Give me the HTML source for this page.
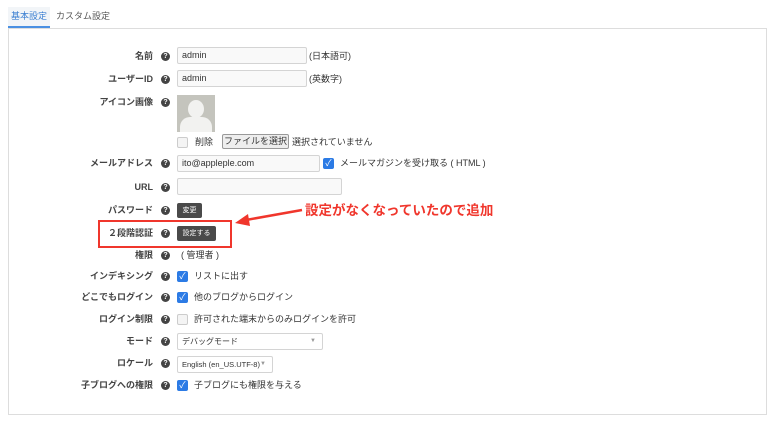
<!DOCTYPE html>
<html><head><meta charset="utf-8"><style>
*{box-sizing:border-box;margin:0;padding:0}
body{width:775px;height:423px;background:#fff;font-family:"Liberation Sans","Noto Sans CJK JP",sans-serif;font-size:9px;color:#333;position:relative;overflow:hidden}
.a{position:absolute;white-space:nowrap}
.lbl{position:absolute;right:622px;font-weight:bold;color:#444;font-size:9px;line-height:12px}
.q{position:absolute;left:161px;width:9px;height:9px;border-radius:50%;background:#444;color:#fff;font-size:7px;font-weight:bold;text-align:center;line-height:9px}
.in{position:absolute;left:177px;height:17px;border:1px solid #d4d4d4;border-radius:2px;background:#f9f9f9;padding-left:4px;line-height:15px;font-size:9px;color:#333}
.cb{position:absolute;left:177px;width:11px;height:11px;border-radius:2px;background:#2c7be5;color:#fff;font-size:9px;line-height:11px;text-align:center}
.cbe{background:#f4f4f4;border:1px solid #ccc}
.btn{position:absolute;left:177px;height:15px;background:#4a4a4a;color:#fff;font-size:7px;line-height:15px;text-align:center;border-radius:2px}
.t{position:absolute;font-size:9px;line-height:12px;color:#333}
.arr{position:absolute;right:6px;top:0;color:#999;font-size:6px}
</style></head><body>
<div class="a" style="left:8px;top:7px;width:42px;height:21px;background:#f2f5f8;border-bottom:2px solid #4a90e2;color:#3b7fd1;font-size:9px;line-height:19px;text-align:center">基本設定</div>
<div class="a" style="left:56px;top:7px;font-size:9px;line-height:19px;color:#555">カスタム設定</div>
<div class="a" style="left:8px;top:28px;width:759px;height:387px;border:1px solid #ddd"></div>

<div class="lbl" style="top:50px">名前</div><div class="q" style="top:52px">?</div>
<div class="in" style="top:47px;width:130px">admin</div><div class="t" style="left:309px;top:50px">(日本語可)</div>
<div class="lbl" style="top:73px">ユーザーID</div><div class="q" style="top:75px">?</div>
<div class="in" style="top:70px;width:130px">admin</div><div class="t" style="left:309px;top:73px">(英数字)</div>
<div class="lbl" style="top:96px">アイコン画像</div><div class="q" style="top:98px">?</div>
<div class="a" style="left:177px;top:95px;width:38px;height:37px;background:#c4c4bd;overflow:hidden">
<div class="a" style="left:11px;top:5px;width:16px;height:18px;border-radius:50%;background:#f2f2f0"></div>
<div class="a" style="left:3px;top:22px;width:32px;height:20px;border-radius:10px 10px 0 0;background:#f2f2f0"></div></div>
<div class="cb cbe" style="top:137px"></div><div class="t" style="left:195px;top:136px">削除</div>
<div class="a" style="left:222px;top:134px;width:67px;height:15px;border:1px solid #999;background:#eee;border-radius:2px;font-size:9px;line-height:13px;text-align:center">ファイルを選択</div>
<div class="t" style="left:292px;top:136px">選択されていません</div>
<div class="lbl" style="top:157px">メールアドレス</div><div class="q" style="top:159px">?</div>
<div class="in" style="top:155px;width:143px">ito@appleple.com</div>
<div class="cb" style="left:323px;top:158px">✓</div><div class="t" style="left:340px;top:157px">メールマガジンを受け取る ( HTML )</div>
<div class="lbl" style="top:181px">URL</div><div class="q" style="top:183px">?</div>
<div class="in" style="top:178px;width:165px"></div>
<div class="lbl" style="top:204px">パスワード</div><div class="q" style="top:206px">?</div>
<div class="btn" style="top:203px;width:25px">変更</div>
<div class="lbl" style="top:227px">２段階認証</div><div class="q" style="top:229px">?</div>
<div class="btn" style="top:226px;width:39px">設定する</div>
<div class="a" style="left:98px;top:220px;width:134px;height:28px;border:2.5px solid #f0362c"></div>
<svg class="a" style="left:232px;top:203px" width="72" height="25"><line x1="70" y1="7" x2="14" y2="17" stroke="#f0362c" stroke-width="2.5"/><polygon points="3,20 16,11 18,23" fill="#f0362c"/></svg>
<div class="a" style="left:305px;top:202px;font-size:13.5px;font-weight:bold;color:#f0362c;line-height:17px">設定がなくなっていたので追加</div>
<div class="lbl" style="top:249px">権限</div><div class="q" style="top:251px">?</div>
<div class="t" style="left:181px;top:249px">( 管理者 )</div>
<div class="lbl" style="top:270px">インデキシング</div><div class="q" style="top:272px">?</div>
<div class="cb" style="top:271px">✓</div><div class="t" style="left:194px;top:270px">リストに出す</div>
<div class="lbl" style="top:291px">どこでもログイン</div><div class="q" style="top:293px">?</div>
<div class="cb" style="top:292px">✓</div><div class="t" style="left:194px;top:291px">他のブログからログイン</div>
<div class="lbl" style="top:313px">ログイン制限</div><div class="q" style="top:315px">?</div>
<div class="cb cbe" style="top:314px"></div><div class="t" style="left:194px;top:313px">許可された端末からのみログインを許可</div>
<div class="lbl" style="top:335px">モード</div><div class="q" style="top:337px">?</div>
<div class="in" style="top:333px;width:146px;background:#fff;font-size:8px">デバッグモード<span class="arr">▼</span></div>
<div class="lbl" style="top:357px">ロケール</div><div class="q" style="top:359px">?</div>
<div class="in" style="top:356px;width:96px;background:#fff;font-size:7.5px;padding-left:4px">English (en_US.UTF-8)<span class="arr">▼</span></div>
<div class="lbl" style="top:379px">子ブログへの権限</div><div class="q" style="top:381px">?</div>
<div class="cb" style="top:380px">✓</div><div class="t" style="left:194px;top:379px">子ブログにも権限を与える</div>
</body></html>
